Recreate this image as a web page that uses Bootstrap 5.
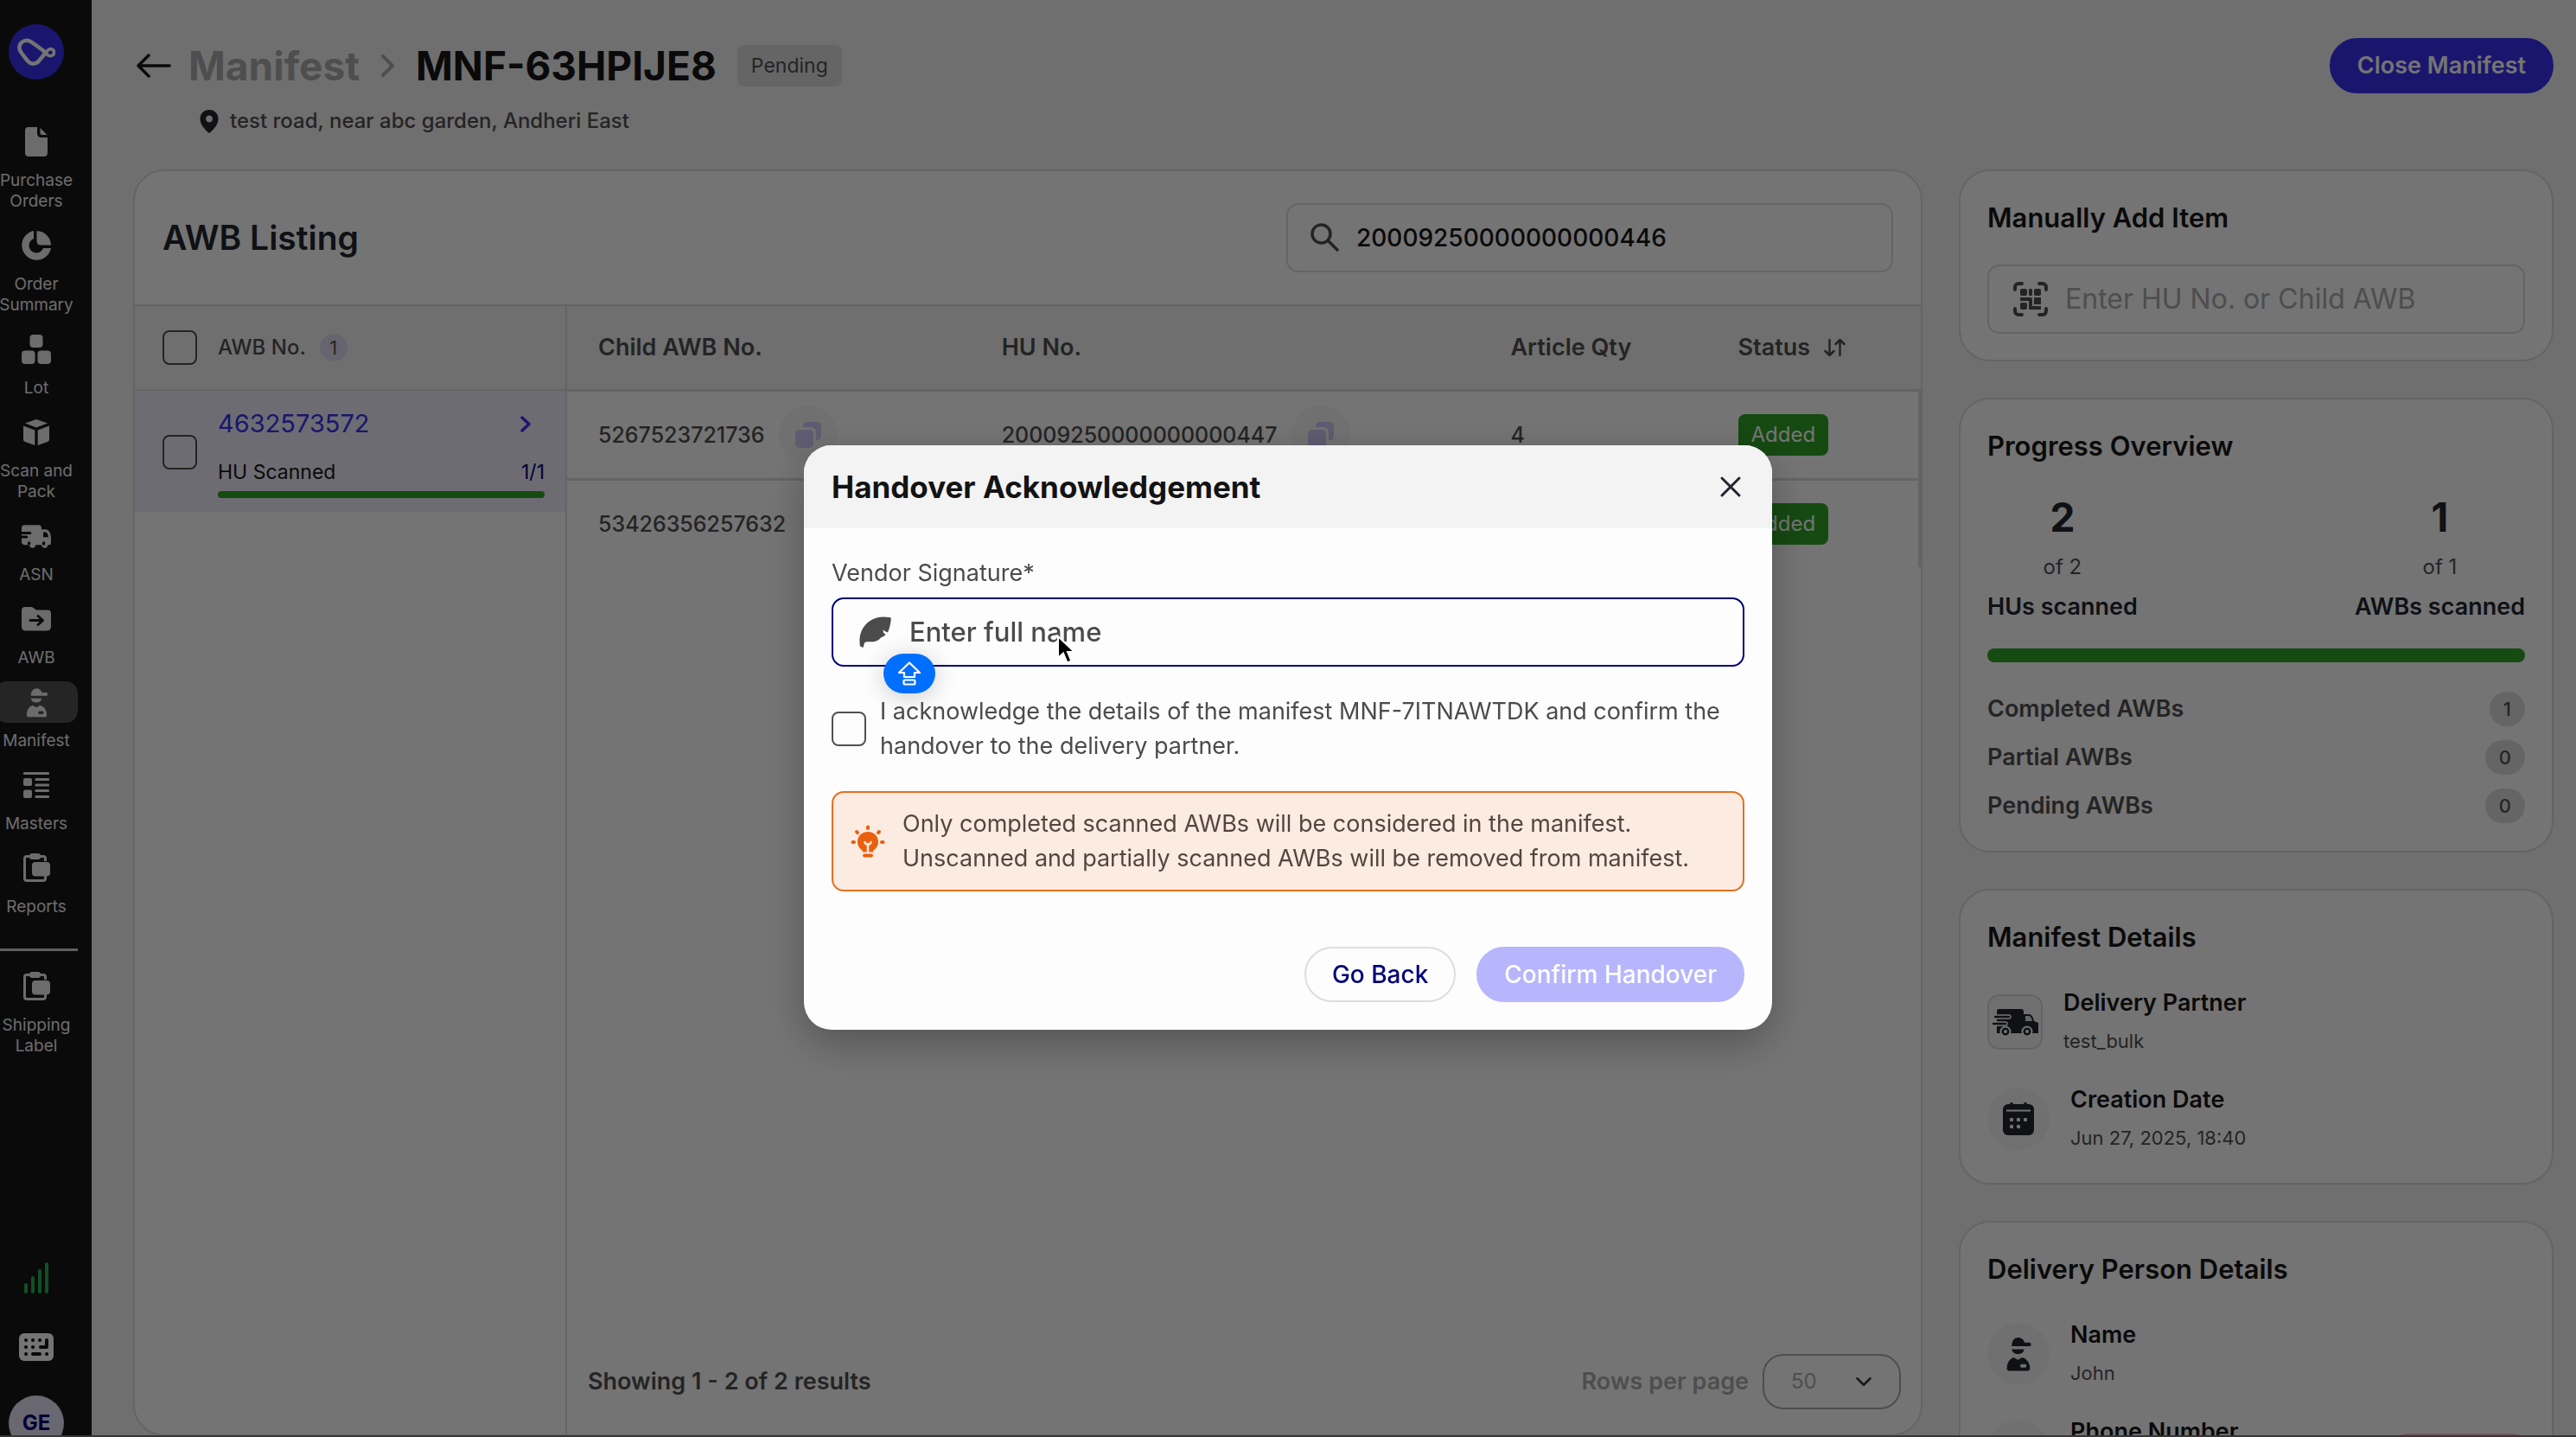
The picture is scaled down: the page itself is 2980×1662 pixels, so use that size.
<!DOCTYPE html>
<html lang="en">
<head>
<meta charset="utf-8">
<meta name="viewport" content="width=device-width, initial-scale=1">
<title>Manifest MNF-63HPIJE8</title>
<link href="https://cdn.jsdelivr.net/npm/bootstrap@5.3.0/dist/css/bootstrap.min.css" rel="stylesheet">
<style>
  :root { --ink:#161616; --body:#505050; --dim:#aaa; --line:#dadada; --brand:#3930f0; --navy:#000078; --ok:#2ea127; --soft:#edebf8; }
  html, body { height:100%; }
  body { font-family:Inter,"Liberation Sans",sans-serif; font-size:27px; line-height:40px; color:#505050; background:#f2f2f2; overflow:hidden; }
  .t-xs { font-size:19px; line-height:24px; }
  .t-sm { font-size:22px; line-height:32px; }
  .t-md { font-size:24px; line-height:32px; }
  .t-lg { font-size:31px; line-height:40px; }
  .t-xl { font-size:39px; line-height:48px; }
  .t-xxl { font-size:46px; line-height:56px; }
  .w-500 { font-weight:500; } .w-600 { font-weight:600; }
  .ink { color:var(--ink); } .night { color:#22252f; } .dim { color:var(--dim); } .brand { color:var(--brand); } .navy { color:var(--navy); }
  svg { flex:none; display:block; }

  .rail { flex:0 0 106px; background:#161616; color:#ebebeb; overflow:hidden; }
  .rail-inner { width:96px; margin-left:-6px; padding-top:28px; }
  .logo { margin-bottom:48px; }
  .rail a { color:inherit; text-decoration:none; text-align:center; margin-bottom:15px; }
  .rail .pill { height:48px; width:100%; border-radius:14px; margin-bottom:9px; }
  .rail a.active .pill { background:#525252; }
  .rail hr { margin:21px 0 17px; border:0; border-top:3px solid #d0d0d0; opacity:1; width:100%; }
  .rail-foot { gap:40px; margin-bottom:-16px; }
  .signal { margin-bottom:6px; }
  .avatar-dot { width:64px; height:64px; background:#e4e0f4; }

  .page { padding:44px 26px 1px 48px; min-width:0; }
  .top { height:64px; }
  .top .back { margin:0 20px 0 4px; }
  .addr { margin:16px 0 40px 76px; gap:12px; }
  .tag { background:#dcdcdc; border-radius:8px; padding:8px 16px; margin-left:24px; font-size:23px; line-height:32px; }
  .pill-btn { height:64px; border-radius:32px; font-size:27px; line-height:40px; padding:10px 30px; font-weight:600; --bs-btn-border-width:2px; }
  .modal .pill-btn { font-size:28px; font-weight:500; }
  .btn-brand { --bs-btn-bg:#3930f0; --bs-btn-color:#fdfdfd; --bs-btn-border-color:#3930f0; }
  .btn-back { --bs-btn-color:#000078; --bs-btn-border-color:#ddd; --bs-btn-bg:#fdfdfd; }
  .btn-confirm { --bs-btn-disabled-bg:#b7b6fd; --bs-btn-disabled-color:#fdfdfd; --bs-btn-disabled-border-color:#b7b6fd; --bs-btn-disabled-opacity:1; }
  .cols { gap:42px; min-height:0; }
  .panel { background:#fdfdfd; border:2px solid var(--line); border-radius:36px; }
  .field { height:80px; border:2px solid var(--line); border-radius:14px; background:#fdfdfd; padding:0 28px; }
  .field input { border:0; outline:0; background:none; padding:0; flex:1; min-width:0; color:inherit; font-size:inherit; font-weight:inherit; }
  .field input::placeholder { color:inherit; opacity:1; }
  .search { width:702px; gap:20px; font-size:28px; font-weight:500; padding:0 26px; }
  .list-head { height:156px; padding:0 32px; border-bottom:2px solid var(--line); }
  .form-check-input.box { width:40px; height:40px; border:2px solid #505050; border-radius:8px; margin:0; float:none; flex:none; background-color:transparent; }
  .awb-col { flex:0 0 500px; border-right:2px solid var(--line); }
  .awb-head { height:98px; background:#f2f2f2; border-bottom:2px solid var(--line); padding:0 32px; gap:24px; }
  .count { width:32px; height:32px; background:#dfdbf0; }
  .awb-row { background:var(--soft); padding:18px 24px 16px 32px; gap:24px; }
  .awb-no { font-size:29px; line-height:40px; }
  .scanned { margin:20px 0 6px; font-size:23px; line-height:32px; }
  .bar-sm { height:8px; } .bar-lg { height:16px; margin-top:32px; }
  .progress { --bs-progress-bar-bg:#2ea127; --bs-progress-bg:#dcdcdc; border-radius:8px; }
  .items { table-layout:fixed; width:100%; border-collapse:separate; border-spacing:0; }
  .items th { height:99px; padding:0 0 0 36px; font-weight:600; background:#f2f2f2; border-bottom:3px solid var(--line); }
  .items td { height:100px; padding:0 0 0 36px; font-weight:500; font-size:25px; }
  .items tr:first-child td { height:103px; border-bottom:3px solid var(--line); }
  .items td:last-child { border-right:3px solid var(--line); }
  .items .btn-copy { width:68px; height:68px; border-radius:50%; background:#f5f5f5; border:0; padding:0; margin-left:16px; color:#cfc7f4; }
  .items .added { background:var(--ok); color:#fdfdfd; border-radius:8px; padding:8px 15px; font-size:24px; line-height:32px; font-weight:400; }
  .list-foot { padding:0 23px 29px 24px; }
  .per-page { width:160px; height:64px; border:2px solid var(--dim); border-radius:24px; color:var(--dim); font-size:24px; padding:0 0 0 31px; background-color:transparent; background-size:20px; background-position:right 31px center; }

  .side { flex:0 0 688px; min-width:0; gap:42px; }
  .side .panel { padding:34px 31px 32px; }
  .side h2, .list-head h2 { margin:0; font-weight:600; }
  .side .add { padding-bottom:30px; }
  .add .field { margin-top:34px; gap:20px; font-size:32px; }
  .stats { margin-top:34px; }
  .stat b { font-size:46px; line-height:56px; font-weight:700; }
  .stat .goal { color:#505050; margin:14px 0; }
  .stat .what { font-weight:600; line-height:32px; }
  .num { background:#dcdcdc; height:40px; border-radius:20px; padding:0 16px; font-size:22px; line-height:40px; font-weight:500; }
  .tally { gap:16px; margin-top:34px; font-weight:600; }
  .facts { gap:40px; margin:42px 0 6px; }
  .fact { height:72px; gap:24px; }
  .fact dt { font-weight:600; font-size:27px; line-height:32px; color:var(--ink); margin-bottom:12px; }
  .fact dd { font-size:22px; line-height:32px; margin:0; }
  .disc { width:72px; height:72px; border-radius:50%; background:#f4f4f4; flex:none; }
  .disc.square { width:64px; height:64px; border-radius:14px; border:2px solid var(--line); }
  .chip { width:150px; height:56px; border-radius:12px; background:#f3c4d0; margin-top:16px; align-self:flex-start; }

  .modal-backdrop { --bs-backdrop-opacity:.54; }
  .modal { padding-top:44px; --bs-modal-width:1120px; }
  .modal-content { border:0; border-radius:32px; background:#fdfdfd; color:#4b4b4b; overflow:hidden; box-shadow:0 16px 48px rgba(0,0,0,.28); }
  .modal-header { height:96px; background:#f3f3f3; border:0; padding:0 32px; border-radius:0; }
  .modal-title { font-size:35px; line-height:44px; font-weight:700; color:#131313; }
  .modal-header button { border:0; background:none; padding:0; width:32px; height:32px; color:#22252f; }
  .modal-body { padding:32px; }
  .sign { border-color:var(--navy); gap:21px; padding:0 30px; margin-top:8px; font-weight:500; }
  .ack { margin:32px 0; gap:16px; }
  .note { background:#fcebe1; border:2px solid #e5701f; border-radius:14px; padding:16px 20px; gap:20px; margin:0 0 64px; color:#54463f; }
  .caps { position:absolute; left:60px; top:65px; width:60px; height:46px; border-radius:23px; background:#006fff; box-shadow:0 4px 28px rgba(0,0,0,.2); z-index:2; }
  .pointer { position:absolute; left:260px; top:43px; z-index:3; }
  .frame-edge { position:fixed; inset:auto 0 0 0; height:2px; background:#3a3536; z-index:2000; }
</style>
<script src="https://cdn.jsdelivr.net/npm/bootstrap@5.3.0/dist/js/bootstrap.bundle.min.js"></script>
</head>
<body>
<svg width="0" height="0" class="position-absolute" aria-hidden="true">
  <symbol id="i-van" viewBox="0 0 34 22"><path fill="currentColor" fill-rule="evenodd" d="M3 1h17a3 3 0 0 1 3 3v1h4.500c4 0 6.500 3.500 6.500 8v4a2 2 0 0 1-2 2h-1.500a4 4 0 0 1-7.600 0h-6.500a4 4 0 0 1-7.600 0H3a3 3 0 0 1-3-3v-3h6a1.200 1.200 0 0 0 0-2.400H0V9.500h10a1.200 1.200 0 0 0 0-2.500H0V4a3 3 0 0 1 3-3zm22 6.500V12h6c-.4-3-1.600-4.500-4-4.500zM8.500 16a1.700 1.700 0 1 0 .1 0zm17 0a1.700 1.700 0 1 0 .1 0z"/></symbol>
  <symbol id="i-man" viewBox="0 0 26 36"><g fill="currentColor"><path d="M6 10C6 4 9 1 12.500 1c3.700 0 6 2.200 6.800 5h5.200a1.500 1.500 0 0 1 1.500 1.500v1.200a1.300 1.300 0 0 1-1.300 1.300z"/><path d="M6 13h13c-.6 3.400-3.200 5-6.500 5S6.600 16.400 6 13z"/><path fill-rule="evenodd" d="M8 21.500l4.500 2.500 4.500-2.500c5 1.500 8 6 8 11.500 0 1.500-1 2.500-2.500 2.500h-19C2 35.500 1 34.500 1 33c0-5.500 2.500-10 7-11.500zm8.500 7a1.800 1.800 0 0 0 0 3.600h3.200a1.800 1.800 0 0 0 0-3.600z"/></g></symbol>
  <symbol id="i-clip" viewBox="0 0 32 34"><path fill="none" stroke="currentColor" stroke-width="3" d="M26.500 9V6a2.500 2.500 0 0 0-2.500-2.500H5A2.500 2.500 0 0 0 2.500 6v23A2.500 2.500 0 0 0 5 31.500h19a2.500 2.500 0 0 0 2.500-2.500v-3"/><rect x="8" y="0" width="13" height="7" rx="3" fill="currentColor"/><rect x="11" y="10" width="21" height="16.500" rx="4" fill="currentColor"/></symbol>
  <symbol id="i-copy" viewBox="0 0 30 30"><rect y="9" width="21" height="21" rx="5" fill="currentColor"/><path fill="currentColor" d="M9 6V4.500C9 2 11 0 13.500 0h12C28 0 30 2 30 4.500v12c0 2.500-2 4.500-4.500 4.500H24v-9c0-3.500-2.500-6-6-6z"/></symbol>
</svg>

<div class="d-flex vh-100">
  <nav class="rail d-flex flex-column justify-content-between" aria-label="Main">
    <div class="rail-inner d-flex flex-column align-items-center">
      <svg class="logo" width="64" height="64" viewBox="0 0 64 64"><circle cx="32" cy="32" r="32" fill="#3930f0"/><path fill="none" stroke="#fdfdfd" stroke-width="4.500" stroke-linejoin="round" d="M42 32L27 21c-4-3-9-3-12.500.5-3.500 4-2.500 8 .5 12l7 9c3.500 4 8 4.500 12 1L44.500 31"/><path fill="none" stroke="#fdfdfd" stroke-width="3.500" d="M41 35l3.500-4c3-4 8-2.500 8 1.500 0 4.500-4.500 5-7.500 3l-5-4.500"/></svg>
      <a href="#" class="w-100 t-xs"><span class="pill d-flex align-items-center justify-content-center"><svg width="26" height="34" viewBox="0 0 26 34" fill="currentColor"><path d="M4 0h10v7c0 3 2 5 5 5h7v18a4 4 0 0 1-4 4H4a4 4 0 0 1-4-4V4a4 4 0 0 1 4-4z"/><path d="M17.500 1l8 8h-6a2 2 0 0 1-2-2z"/></svg></span>Purchase<br>Orders</a>
      <a href="#" class="w-100 t-xs"><span class="pill d-flex align-items-center justify-content-center"><svg width="34" height="34" viewBox="0 0 34 34" fill="currentColor"><path d="M14 0v9a8.500 8.500 0 1 0 11 11h9A17 17 0 1 1 14 0z"/><path d="M17.500 0A17 17 0 0 1 34 16.500H22a4.500 4.500 0 0 1-4.500-4.500z"/></svg></span>Order<br>Summary</a>
      <a href="#" class="w-100 t-xs"><span class="pill d-flex align-items-center justify-content-center"><svg width="34" height="34" viewBox="0 0 34 34" fill="currentColor"><rect x="9.500" width="15" height="15" rx="4"/><rect y="18.500" width="15.500" height="15.500" rx="4"/><rect x="18.500" y="18.500" width="15.500" height="15.500" rx="4"/></svg></span>Lot</a>
      <a href="#" class="w-100 t-xs"><span class="pill d-flex align-items-center justify-content-center"><svg width="30" height="30" viewBox="0 0 30 30" fill="currentColor"><path d="M15 0l13 4.500L15 9.500 2 4.500z"/><path d="M0 7.500l13.300 5V30L2 26c-1.300-.5-2-1.500-2-3zM30 7.500l-13.300 5V30L28 26c1.300-.5 2-1.500 2-3z"/></svg></span>Scan and<br>Pack</a>
      <a href="#" class="w-100 t-xs"><span class="pill d-flex align-items-center justify-content-center"><svg width="34" height="28" viewBox="0 0 34 22" preserveAspectRatio="none"><use href="#i-van"/></svg></span>ASN</a>
      <a href="#" class="w-100 t-xs"><span class="pill d-flex align-items-center justify-content-center"><svg width="34" height="28" viewBox="0 0 34 28"><path fill="currentColor" d="M4 0h8l5 3.500h13a4 4 0 0 1 4 4V23a4.500 4.500 0 0 1-4.500 4.500h-25A4.500 4.500 0 0 1 0 23V4a4 4 0 0 1 4-4z"/><path fill="none" stroke="#161616" stroke-width="3" stroke-linecap="round" stroke-linejoin="round" d="M10 15.500h14M19 10.500l5.500 5-5.500 5"/></svg></span>AWB</a>
      <a href="#" class="w-100 t-xs active" aria-current="page"><span class="pill d-flex align-items-center justify-content-center"><svg width="25" height="35"><use href="#i-man"/></svg></span>Manifest</a>
      <a href="#" class="w-100 t-xs"><span class="pill d-flex align-items-center justify-content-center"><svg width="30" height="30" viewBox="0 0 30 30" fill="currentColor"><rect width="30" height="3" rx="1"/><rect y="7" width="10" height="9" rx="2"/><rect y="20.500" width="10" height="9.500" rx="2"/><rect x="13.500" y="7" width="16.500" height="3" rx="1"/><rect x="13.500" y="13.500" width="16.500" height="3" rx="1"/><rect x="13.500" y="20" width="16.500" height="3" rx="1"/><rect x="13.500" y="27" width="16.500" height="3" rx="1"/></svg></span>Masters</a>
      <a href="#" class="w-100 t-xs"><span class="pill d-flex align-items-center justify-content-center"><svg width="32" height="34"><use href="#i-clip"/></svg></span>Reports</a>
      <hr>
      <a href="#" class="w-100 t-xs"><span class="pill d-flex align-items-center justify-content-center"><svg width="32" height="34"><use href="#i-clip"/></svg></span>Shipping<br>Label</a>
    </div>
    <div class="rail-inner rail-foot d-flex flex-column align-items-center">
      <svg class="signal" width="28" height="36" viewBox="0 0 28 36" fill="#25ae50"><rect y="24" width="4" height="12" rx="2"/><rect x="8" y="16" width="4" height="20" rx="2"/><rect x="16" y="8" width="4" height="28" rx="2"/><rect x="24" width="4" height="36" rx="2"/></svg>
      <svg width="40" height="32" viewBox="0 0 40 32"><rect width="40" height="32" rx="6" fill="#fdfdfd"/><g stroke="#161616" stroke-width="4" stroke-linecap="round" stroke-linejoin="round" fill="none"><path d="M8 8h.1M16 8h.1M24 8h.1M8 16h.1M16 16h.1M8 24h.1M16 24h8M32 24h.1M32 8v8h-7"/></g></svg>
      <div class="avatar-dot rounded-circle d-flex align-items-center justify-content-center t-md fw-bold navy">GE</div>
    </div>
  </nav>

  <main class="page flex-grow-1 d-flex flex-column">
    <header class="top d-flex align-items-center">
      <a href="#" class="back ink" aria-label="Back"><svg width="40" height="28" viewBox="0 0 40 28" fill="none" stroke="currentColor" stroke-width="3.500" stroke-linecap="round" stroke-linejoin="round"><path d="M38 14H2M14 2L2 14l12 12"/></svg></a>
      <a href="#" class="t-xxl fw-bold dim text-decoration-none">Manifest</a>
      <svg class="dim mx-4" width="17" height="26" viewBox="0 0 17 26" fill="none" stroke="currentColor" stroke-width="4" stroke-linecap="round" stroke-linejoin="round"><path d="M3 2l11 11L3 24"/></svg>
      <h1 class="t-xxl fw-bold ink m-0">MNF-63HPIJE8</h1>
      <span class="tag">Pending</span>
      <button type="button" class="btn btn-brand pill-btn ms-auto">Close Manifest</button>
    </header>
    <div class="addr d-flex align-items-center t-md w-500">
      <svg width="24" height="27" viewBox="0 0 24 27"><path fill="#22252f" fill-rule="evenodd" d="M12 0c6 0 10.500 4.500 10.500 10.500C22.500 17 17 23 12 27 7 23 1.500 17 1.500 10.500 1.500 4.500 6 0 12 0zm0 6.500a4 4 0 1 0 .1 0z"/></svg>
      test road, near abc garden, Andheri East
    </div>

    <div class="cols d-flex flex-grow-1">
      <section class="panel flex-grow-1 d-flex flex-column overflow-hidden">
        <div class="list-head d-flex align-items-center justify-content-between">
          <h2 class="t-xl night">AWB Listing</h2>
          <label class="field search d-flex align-items-center ink">
            <svg width="33" height="34" viewBox="0 0 33 34" fill="none" stroke="#505050" stroke-width="3.500" stroke-linecap="round"><circle cx="12.500" cy="12.500" r="10.500"/><path d="M20.500 20.500L31 31"/></svg>
            <input type="text" value="20009250000000000446" aria-label="Search">
          </label>
        </div>
        <div class="d-flex flex-grow-1">
          <div class="awb-col">
            <div class="awb-head d-flex align-items-center t-md">
              <input class="form-check-input box" type="checkbox" id="all">
              <div class="d-flex gap-3"><label for="all" class="w-500">AWB No.</label>
              <span class="count rounded-circle t-sm text-center">1</span></div>
            </div>
            <div class="awb-row d-flex align-items-center">
              <input class="form-check-input box" type="checkbox" aria-label="Select 4632573572">
              <div class="flex-grow-1">
                <div class="d-flex align-items-center justify-content-between pe-3"><a href="#" class="awb-no brand text-decoration-none">4632573572</a>
                  <svg class="brand" width="12" height="19" viewBox="0 0 12 19" fill="none" stroke="currentColor" stroke-width="3.500" stroke-linecap="round" stroke-linejoin="round"><path d="M2 2l8 7.500L2 17"/></svg></div>
                <div class="scanned d-flex justify-content-between ink"><span>HU Scanned</span><span class="navy">1/1</span></div>
                <div class="progress bar-sm"><div class="progress-bar" style="width:100%"></div></div>
              </div>
            </div>
          </div>
          <div class="flex-grow-1 d-flex flex-column justify-content-between">
            <table class="items">
              <colgroup><col style="width:29.8%"><col style="width:37.6%"><col style="width:16.8%"><col></colgroup>
              <thead><tr><th>Child AWB No.</th><th>HU No.</th><th>Article Qty</th><th><span class="d-flex align-items-center gap-3">Status <svg width="26" height="22" viewBox="0 0 26 22" fill="none" stroke="currentColor" stroke-width="2.500" stroke-linecap="round" stroke-linejoin="round"><path d="M6.500 2v18M1.500 15l5 5 5-5M18.500 20V2M13.500 7l5-5 5 5"/></svg></span></th></tr></thead>
              <tbody>
                <tr><td><div class="d-flex align-items-center">5267523721736<button type="button" class="btn-copy d-flex align-items-center justify-content-center" aria-label="Copy"><svg width="30" height="30"><use href="#i-copy"/></svg></button></div></td>
                  <td><div class="d-flex align-items-center">20009250000000000447<button type="button" class="btn-copy d-flex align-items-center justify-content-center" aria-label="Copy"><svg width="30" height="30"><use href="#i-copy"/></svg></button></div></td>
                  <td>4</td><td><span class="added d-inline-block">Added</span></td></tr>
                <tr><td>53426356257632</td><td></td><td></td><td><span class="added d-inline-block">Added</span></td></tr>
              </tbody>
            </table>
            <div class="list-foot d-flex align-items-center justify-content-between w-600">
              <span>Showing 1 - 2 of 2 results</span>
              <div class="d-flex align-items-center gap-3"><label for="pp" class="dim">Rows per page</label>
                <select id="pp" class="form-select per-page"><option>50</option></select></div>
            </div>
          </div>
        </div>
      </section>

      <aside class="side d-flex flex-column">
        <section class="panel add">
          <h2 class="t-lg ink">Manually Add Item</h2>
          <label class="field d-flex align-items-center dim">
            <svg width="40" height="40" viewBox="0 0 40 40" fill="none" stroke="#505050" stroke-width="4" stroke-linecap="round"><path d="M2 9V6a4 4 0 0 1 4-4h4M30 2h4a4 4 0 0 1 4 4v3M38 31v3a4 4 0 0 1-4 4h-4M10 38H6a4 4 0 0 1-4-4v-3"/><g fill="#505050" stroke="none"><rect x="8" y="8" width="8" height="8" rx="2"/><rect x="18" y="8" width="4" height="8" rx="1"/><rect x="24" y="8" width="8" height="8" rx="2"/><path d="M8 18h12a2 2 0 0 1 2 2v8h10v4H18V22H8zM24 18h8v8h-8z"/><rect x="8" y="24" width="8" height="8" rx="2"/></g></svg>
            <input type="text" placeholder="Enter HU No. or Child AWB" aria-label="Enter HU No. or Child AWB">
          </label>
        </section>
        <section class="panel">
          <h2 class="t-lg ink">Progress Overview</h2>
          <div class="stats d-flex justify-content-between text-center night">
            <div class="stat"><b class="d-block">2</b><div class="goal t-md">of 2</div><div class="what">HUs scanned</div></div>
            <div class="stat"><b class="d-block">1</b><div class="goal t-md">of 1</div><div class="what">AWBs scanned</div></div>
          </div>
          <div class="progress bar-lg"><div class="progress-bar" style="width:100%"></div></div>
          <div class="tally d-flex flex-column">
            <div class="d-flex justify-content-between">Completed AWBs<span class="num">1</span></div>
            <div class="d-flex justify-content-between">Partial AWBs<span class="num">0</span></div>
            <div class="d-flex justify-content-between">Pending AWBs<span class="num">0</span></div>
          </div>
        </section>
        <section class="panel">
          <h2 class="t-lg ink">Manifest Details</h2>
          <dl class="facts d-flex flex-column">
            <div class="fact d-flex align-items-center"><span class="disc square d-flex align-items-center justify-content-center">
              <svg width="54" height="34" viewBox="0 0 54 34"><path fill="#22252f" d="M8 2h26a3 3 0 0 1 3 3v3h6c3 0 5 3 6 8l5 2v12H6V5c0-2 1-3 2-3z"/><path fill="#dcdcdc" d="M39 10h4c2 0 3.500 3 4 6h-8z"/><g stroke="#fdfdfd" stroke-width="1.500" fill="#22252f"><rect x="2" y="9" width="20" height="4" rx="2"/><rect x="0" y="17" width="18" height="4" rx="2"/></g><g fill="#22252f" stroke="#fdfdfd" stroke-width="2"><circle cx="16" cy="28" r="5.500"/><circle cx="41" cy="28" r="5.500"/></g><circle cx="16" cy="28" r="2" fill="#fdfdfd"/><circle cx="41" cy="28" r="2" fill="#fdfdfd"/></svg></span>
              <div><dt>Delivery Partner</dt><dd>test_bulk</dd></div></div>
            <div class="fact d-flex align-items-center"><span class="disc d-flex align-items-center justify-content-center">
              <svg width="36" height="38" viewBox="0 0 36 38"><rect y="2" width="36" height="36" rx="6" fill="#22252f"/><path stroke="#22252f" stroke-width="4" stroke-linecap="round" d="M10 2v5M26 2v5"/><path stroke="#fdfdfd" stroke-width="2" d="M4 9.500h28"/><g fill="#fdfdfd"><circle cx="10" cy="20" r="2.200"/><circle cx="18" cy="20" r="2.200"/><circle cx="26" cy="20" r="2.200"/><circle cx="10" cy="28" r="2.200"/><circle cx="18" cy="28" r="2.200"/></g></svg></span>
              <div><dt>Creation Date</dt><dd>Jun 27, 2025, 18:40</dd></div></div>
          </dl>
        </section>
        <section class="panel">
          <h2 class="t-lg ink">Delivery Person Details</h2>
          <dl class="facts d-flex flex-column">
            <div class="fact d-flex align-items-center"><span class="disc d-flex align-items-center justify-content-center night"><svg width="30" height="40"><use href="#i-man"/></svg></span>
              <div><dt>Name</dt><dd>John</dd></div></div>
            <div class="fact d-flex align-items-center"><span class="disc"></span><div class="flex-grow-1"><dt>Phone Number</dt><dd>&nbsp;</dd></div><span class="chip"></span></div>
          </dl>
        </section>
      </aside>
    </div>
  </main>
</div>

<div class="modal-backdrop show"></div>
<div class="modal show d-block" tabindex="-1" role="dialog" aria-labelledby="dlg">
  <div class="modal-dialog modal-dialog-centered">
    <form class="modal-content">
      <div class="modal-header d-flex align-items-center justify-content-between">
        <h2 class="modal-title" id="dlg">Handover Acknowledgement</h2>
        <button type="button" aria-label="Close"><svg width="32" height="32" viewBox="0 0 32 32" fill="none" stroke="currentColor" stroke-width="3" stroke-linecap="round"><path d="M6 6l20 20M26 6L6 26"/></svg></button>
      </div>
      <div class="modal-body">
        <label for="sig" class="d-block">Vendor Signature*</label>
        <div class="position-relative">
          <div class="field sign d-flex align-items-center t-lg">
            <svg width="37" height="36" viewBox="0 0 37 36"><path fill="#4b4b4b" d="M35 1c1.500.2 1.800 1 1.800 2-.6 6-1.800 11-3.800 15.500l-3.500-1.500-2-2 .5 4 2.500 1.500c-1 2-2.500 3-5 3.500l-3 3c-3 2-6 2.500-9.500 2.300-3-.2-6-.5-7 1.500L4.500 36 1 34.500C-1 24 2 13 11 6c7-5 15-6.500 24-5z"/></svg>
            <input type="text" id="sig" placeholder="Enter full name">
          </div>
          <div class="caps d-flex align-items-center justify-content-center"><svg width="28" height="28" viewBox="0 0 28 28" fill="none" stroke="#fff" stroke-width="2.200" stroke-linejoin="round"><path d="M14 1.500L26 13h-6v5H8v-5H2z"/><rect x="7.500" y="21.500" width="13" height="5" rx="1.500"/></svg></div>
          <svg class="pointer" width="24" height="36" viewBox="0 0 24 36"><path d="M2 2v25l6-5.500 4.500 11 5-2-4.500-10.500h8z" fill="#000" stroke="#fff" stroke-width="2"/></svg>
        </div>
        <div class="ack d-flex align-items-center">
          <input class="form-check-input box" type="checkbox" id="ok">
          <label for="ok">I acknowledge the details of the manifest MNF-7ITNAWTDK and confirm the handover to the delivery partner.</label>
        </div>
        <div class="note d-flex align-items-center" role="note">
          <svg width="40" height="38" viewBox="0 0 40 38"><g stroke="#ea5f0e" stroke-width="4" stroke-linecap="round"><path d="M20 2.500v1.500M7 8l1 1M33 8l-1 1M2.500 20H4M36 20h1.500"/></g><path fill="#ea5f0e" d="M20 8c7 0 12 5 12 11.500 0 4.500-2.500 8-6 10.500v1.500H14V30c-3.500-2.500-6-6-6-10.500C8 13 13 8 20 8z"/><path stroke="#fcebe1" stroke-width="2.500" stroke-linecap="round" fill="none" d="M20 31v-9M16.500 20c0 2 3.500 3 3.500 3s3.500-1 3.500-3"/><rect x="14" y="33.500" width="12" height="4" rx="2" fill="#ea5f0e"/></svg>
          <div>Only completed scanned AWBs will be considered in the manifest.<br>Unscanned and partially scanned AWBs will be removed from manifest.</div>
        </div>
        <div class="d-flex justify-content-end gap-4">
          <button type="button" class="btn btn-back pill-btn">Go Back</button>
          <button type="submit" class="btn btn-confirm pill-btn" disabled>Confirm Handover</button>
        </div>
      </div>
    </form>
  </div>
</div>
<div class="frame-edge"></div>
</body>
</html>
